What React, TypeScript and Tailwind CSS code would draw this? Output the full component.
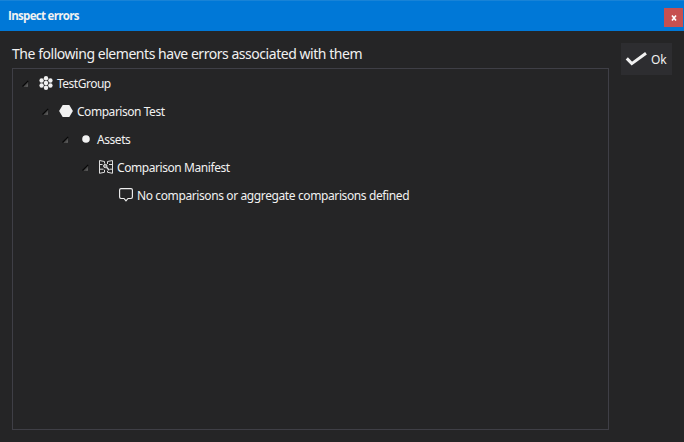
import type { ReactNode } from "react";

function Expander() {
  return (
    <svg className="-ml-px mb-px h-[8px] w-[8px] shrink-0" viewBox="0 0 8 8">
      <path d="M6 1.5V7H1Z" fill="#484848" />
      <path d="M0.5 6.5L6.2 0.8" fill="none" stroke="#080808" strokeWidth="1.2" />
      <path d="M3.5 6.6L6 4V6.6Z" fill="#5c5c5c" />
    </svg>
  );
}

function GroupIcon() {
  const cells = [[7, 7], [7, 2.3], [7, 11.7], [2.6, 4.5], [11.4, 4.5], [2.6, 9.5], [11.4, 9.5]];
  return (
    <svg className="h-[14px] w-[14px]" viewBox="0 0 14 14" fill="#f1f1f1">
      {cells.map(([x, y]) => (
        <circle key={`${x}-${y}`} cx={x} cy={y} r="2.2" />
      ))}
    </svg>
  );
}

function HexagonIcon() {
  return (
    <svg className="h-[14px] w-[14px]" viewBox="0 0 14 14">
      <path d="M3.7 1H10.3L13.9 7L10.3 13H3.7L0.1 7Z" fill="#f1f1f1" />
    </svg>
  );
}

function DotIcon() {
  return (
    <svg className="h-[14px] w-[14px]" viewBox="0 0 14 14">
      <circle cx="7" cy="7" r="3.8" fill="#f1f1f1" />
    </svg>
  );
}

function ManifestIcon() {
  return (
    <svg className="h-[14px] w-[14px]" viewBox="0 0 14 14" fill="none" stroke="#dedede">
      <path d="M5.5 1.5L0.5 0.5V13.3L5.5 12.3M8.5 1.5L13.5 0.5V13.3L8.5 12.3" />
      <path d="M0.5 4.5H3.5M0.5 9.2H4.5M10 4.5H13.5M10.8 9.2H13.5M5.5 1.5V3.5M5.5 9.8V12.3M8.5 1.5V4M8.5 10.8V12.3" />
      <circle cx="6.3" cy="6" r="1.7" fill="#909090" />
      <path d="M7.6 7.3L10.3 10.2" strokeWidth="1.5" />
    </svg>
  );
}

function MessageIcon() {
  return (
    <svg className="h-[14px] w-[14px]" viewBox="0 0 14 14" fill="none" stroke="#eeeeee" strokeWidth="1.15">
      <path d="M2 0.6H12Q13.4 0.6 13.4 2V9.1Q13.4 10.5 12 10.5H9L7 12.9L5 10.5H2Q0.6 10.5 0.6 9.1V2Q0.6 0.6 2 0.6Z" />
    </svg>
  );
}

function TreeRow({ indent, icon, label, spacing, leaf = false }: {
  indent: string;
  icon: ReactNode;
  label: string;
  spacing: string;
  leaf?: boolean;
}) {
  return (
    <div className={`flex h-7 items-center ${indent}`}>
      <div className="w-4 shrink-0">{!leaf && <Expander />}</div>
      <div className="mb-[2px] mr-1 shrink-0">{icon}</div>
      <span className={`whitespace-nowrap text-[12px] leading-4 ${spacing}`}>{label}</span>
    </div>
  );
}

export default function App() {
  return (
    <div className="flex h-[442px] w-[684px] flex-col bg-[#252526] font-['Noto_Sans','Open_Sans',sans-serif] text-[#f1f1f1]">
      <header className="flex h-[31px] shrink-0 justify-between border-t border-[#1883d7] bg-[#0078d7] pl-2">
        <h1 className="pt-[7px] font-['Open_Sans',sans-serif] text-[11.5px] font-bold leading-4 tracking-[-0.68px]">
          Inspect errors
        </h1>
        <button aria-label="Close" className="mr-px mt-[7px] flex h-[19px] w-[19px] items-center justify-center bg-[#c75050]">
          <svg className="h-[6px] w-[6px]" viewBox="0 0 6 6" stroke="#ffffff" strokeWidth="1.6">
            <path d="M1 0.5L5 5.5M5 0.5L1 5.5" />
          </svg>
        </button>
      </header>
      <main className="flex min-h-0 flex-1 gap-3 px-3 pb-3 pt-3">
        <section className="flex w-[597px] flex-col">
          <h2 className="h-[25px] whitespace-nowrap pt-px text-[14px] leading-[20px] tracking-[-0.46px]">
            The following elements have errors associated with them
          </h2>
          <div className="h-[362px] border border-[#3f3f46] pt-px">
            <TreeRow indent="pl-[10px]" icon={<GroupIcon />} label="TestGroup" spacing="tracking-[-0.5px]" />
            <TreeRow indent="pl-[30px]" icon={<HexagonIcon />} label="Comparison Test" spacing="tracking-[-0.46px]" />
            <TreeRow indent="pl-[50px]" icon={<DotIcon />} label="Assets" spacing="tracking-[-0.45px]" />
            <TreeRow indent="pl-[70px]" icon={<ManifestIcon />} label="Comparison Manifest" spacing="tracking-[-0.43px]" />
            <TreeRow indent="pl-[90px]" icon={<MessageIcon />} label="No comparisons or aggregate comparisons defined" spacing="tracking-[-0.39px]" leaf />
          </div>
        </section>
        <button className="flex h-8 w-[51px] shrink-0 items-center bg-[#2d2d30] pl-[4px] text-[12px]">
          <svg className="mr-[4px] h-[16px] w-[22px]" viewBox="0 0 22 16">
            <path d="M1.8 7.4L6.8 12.6L21 2.2" fill="none" stroke="#f1f1f1" strokeWidth="3" />
          </svg>
          <span className="pt-[2px] leading-4 tracking-[-0.2px]">Ok</span>
        </button>
      </main>
    </div>
  );
}
